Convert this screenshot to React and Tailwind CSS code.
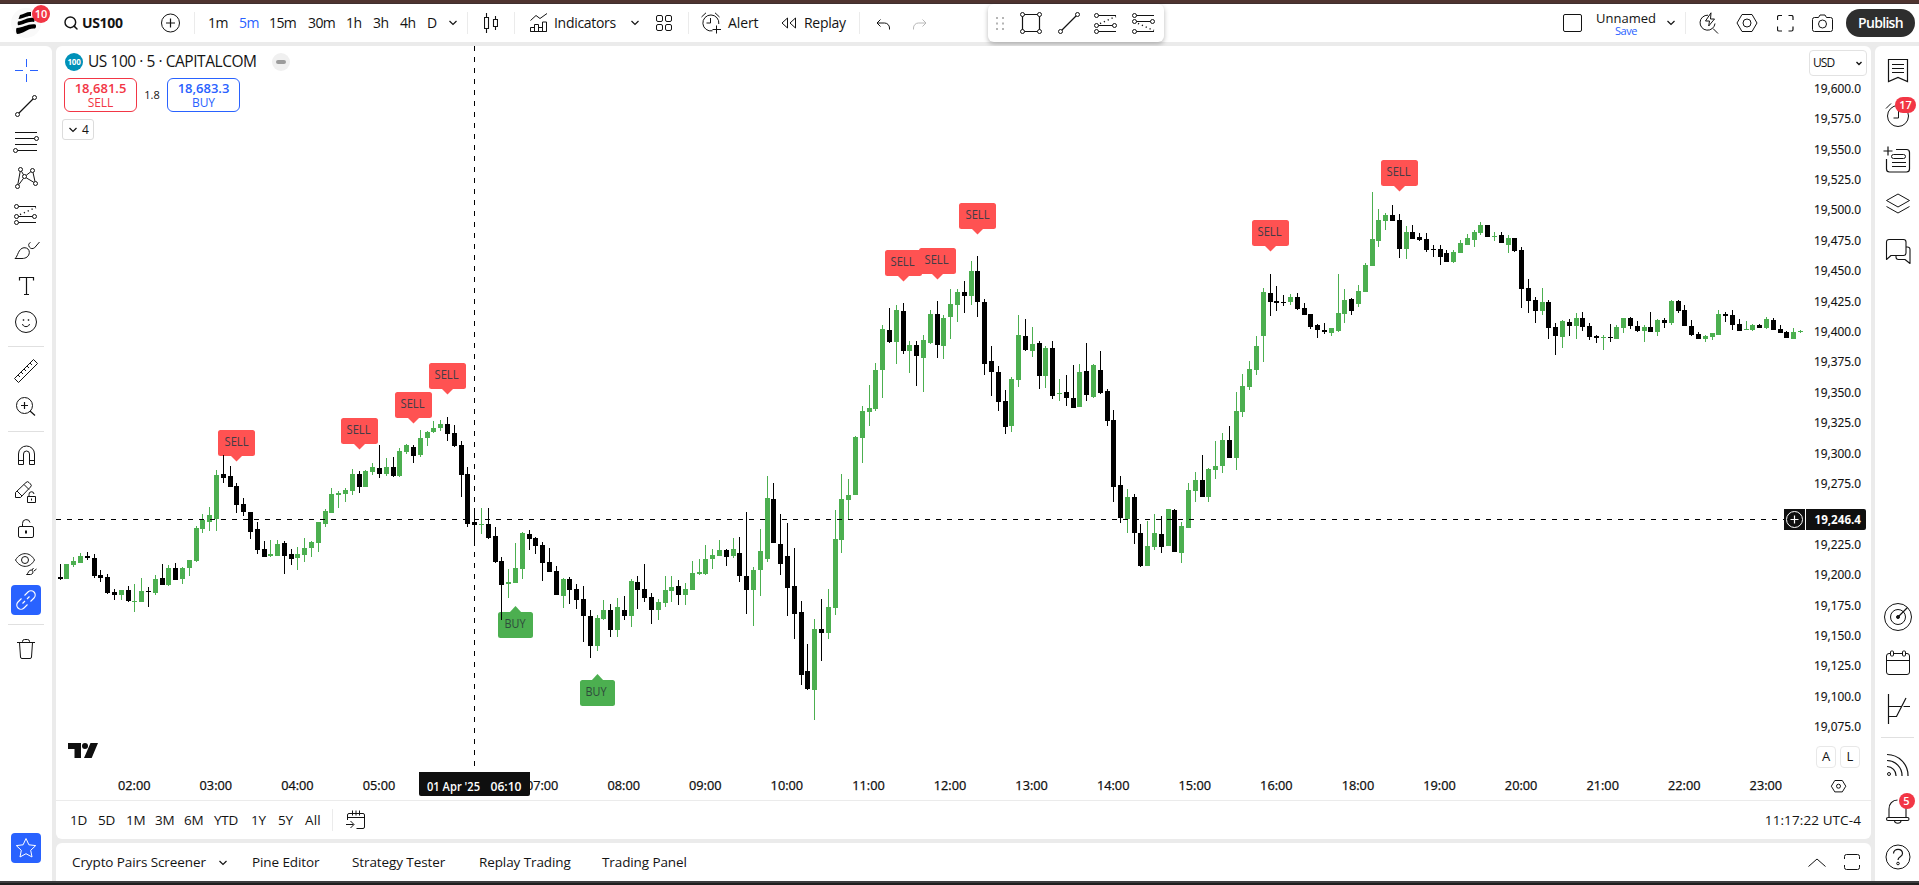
import React from 'react';
import { Search } from 'lucide-react';

// first bar x and bar spacing, in px
const BAR_START = 60.05;
const BAR_STEP = 6.7984;

// [up, high, body top, body bottom, low]
const CANDLES = [
  [0,564,577,579,580],[1,564,564,579,579],[1,557,561,565,567],[1,553,556,563,563],[0,552,556,558,560],
  [0,554,558,576,578],[0,570,575,578,582],[0,574,577,593,594],[0,589,592,595,600],[1,590,590,595,600],
  [0,586,590,601,602],[1,584,601,602,612],[1,578,591,602,602],[0,587,591,592,607],[1,575,579,593,595],
  [0,564,578,585,585],[1,565,568,585,586],[0,563,568,580,580],[1,567,568,579,584],[1,560,560,568,576],
  [1,526,528,561,562],[1,514,520,529,533],[1,507,515,522,531],[1,470,475,519,531],[0,455,474,478,483],
  [0,466,476,487,487],[0,483,486,505,513],[0,498,504,512,516],[0,512,512,532,539],[0,522,529,550,554],
  [0,541,549,557,557],[1,540,554,556,557],[1,540,544,556,556],[0,541,543,556,574],[0,549,554,559,565],
  [1,547,554,558,570],[1,538,548,555,562],[1,541,542,548,557],[1,522,522,543,552],[1,509,511,524,527],
  [1,488,494,513,513],[1,491,493,495,508],[1,488,490,494,502],[1,469,474,491,495],[0,471,474,487,493],
  [1,470,471,487,487],[1,463,467,472,475],[0,445,468,474,478],[1,458,467,474,476],[0,457,467,476,477],
  [1,448,451,476,477],[1,444,445,452,454],[0,445,447,456,463],[1,430,438,455,457],[1,431,432,438,446],
  [1,421,428,432,433],[1,420,424,428,431],[0,417,424,434,441],[0,425,433,446,447],[0,441,445,475,497],
  [0,467,474,524,527],[0,508,522,525,546],[1,508,524,525,534],[0,508,524,538,539],[0,527,536,562,563],
  [0,557,561,585,620],[1,569,582,584,598],[1,543,568,583,583],[1,532,533,569,579],[0,530,534,539,550],
  [0,537,538,546,554],[0,542,545,563,581],[0,548,562,572,572],[0,566,571,595,595],[1,578,579,596,608],
  [0,577,579,590,604],[0,584,589,600,609],[0,586,599,616,642],[0,610,616,646,658],[1,615,618,646,651],
  [1,600,610,619,620],[0,604,610,630,637],[1,598,607,630,637],[0,596,610,616,620],[1,579,581,616,627],
  [0,576,582,590,609],[0,564,589,598,602],[0,593,597,610,624],[1,599,602,610,620],[1,576,590,603,607],
  [1,576,587,591,602],[0,580,586,595,605],[1,583,589,595,605],[1,561,573,590,590],[1,559,572,574,575],
  [1,545,559,574,575],[1,549,555,559,569],[1,540,550,556,556],[0,549,550,557,566],[1,538,549,556,558],
  [0,537,553,576,582],[0,512,576,590,614],[1,567,570,590,626],[1,529,551,570,596],[1,476,498,559,562],
  [0,483,499,543,543],[0,514,544,564,575],[0,523,556,588,616],[0,548,586,614,639],[0,601,612,675,685],
  [0,644,671,689,690],[1,619,629,690,720],[0,599,629,633,661],[1,589,607,633,639],[1,510,539,608,615],
  [1,474,499,540,553],[1,479,495,500,519],[1,436,437,495,495],[1,406,411,438,463],[1,385,408,412,426],
  [1,363,370,409,411],[1,325,329,370,398],[0,308,330,342,343],[1,305,310,342,364],[0,303,311,351,354],
  [1,341,345,351,373],[0,341,345,356,386],[1,335,340,358,392],[1,310,314,343,344],[0,301,314,345,358],
  [1,315,318,346,359],[1,289,304,317,339],[1,289,292,305,322],[0,281,292,296,313],[1,261,271,296,305],
  [0,256,271,302,317],[0,299,302,364,375],[0,346,361,372,396],[0,366,372,402,411],[0,390,401,427,434],
  [1,377,379,426,432],[1,315,335,380,387],[0,319,336,350,351],[1,327,344,351,357],[0,341,343,376,389],
  [1,346,348,376,388],[0,341,348,396,399],[1,379,393,394,401],[0,375,392,398,406],[0,365,398,408,408],
  [1,364,372,407,407],[0,343,371,395,401],[1,364,365,397,398],[0,351,370,393,394],[0,389,391,421,426],
  [0,410,420,487,502],[0,476,485,518,523],[1,489,497,519,533],[0,494,497,533,544],[0,524,533,566,567],
  [1,521,546,566,566],[1,514,533,547,550],[0,516,534,547,553],[1,509,509,546,546],[0,509,510,552,552],
  [1,522,526,553,563],[1,483,490,528,528],[1,472,480,491,502],[0,455,480,497,497],[1,468,469,497,502],
  [1,441,466,470,479],[1,433,440,466,473],[0,426,440,458,458],[1,392,411,458,470],[1,374,386,412,417],
  [1,361,369,387,390],[1,336,346,370,375],[1,288,292,336,362],[0,274,293,302,316],[0,286,301,303,311],
  [0,295,302,303,306],[1,294,297,302,305],[0,293,297,309,310],[0,303,308,315,315],[0,314,314,327,329],
  [0,324,325,330,338],[0,323,330,332,334],[1,328,328,333,336],[1,274,313,331,332],[1,289,300,314,323],
  [0,298,299,311,315],[1,285,291,304,307],[1,263,265,292,292],[1,192,239,266,266],[1,209,220,241,247],
  [1,213,215,221,230],[0,205,215,221,221],[0,214,220,249,258],[1,226,232,249,259],[0,225,232,239,239],
  [0,233,237,240,241],[0,233,239,250,252],[0,245,249,250,257],[0,245,249,257,265],[0,250,253,262,262],
  [1,250,252,262,263],[1,240,243,253,253],[1,234,238,245,245],[1,230,232,240,247],[1,222,225,233,235],
  [0,225,225,237,237],[1,232,236,237,241],[0,232,235,243,243],[1,235,238,245,253],[0,238,238,251,252],
  [0,247,250,289,308],[0,279,288,301,313],[0,297,300,311,323],[1,288,302,311,315],[0,300,302,328,339],
  [0,323,327,336,355],[1,320,321,337,348],[0,319,322,326,336],[1,313,318,326,339],[0,312,318,327,331],
  [0,323,326,337,340],[0,335,336,338,343],[1,335,337,338,350],[0,324,337,338,342],[1,325,327,339,339],
  [1,318,318,328,333],[0,317,318,326,329],[0,321,326,331,332],[1,325,327,331,342],[0,312,327,332,332],
  [1,319,320,332,336],[0,318,320,323,328],[1,300,301,323,325],[0,300,301,311,313],[0,305,310,326,326],
  [0,320,326,335,336],[0,332,334,339,339],[1,335,336,339,342],[1,333,333,337,340],[1,310,314,335,335],
  [0,312,314,316,322],[0,310,315,325,330],[0,319,324,331,331],[1,321,329,330,330],[1,324,325,330,331],
  [0,324,325,328,328],[1,317,319,328,329],[0,318,320,330,330],[0,325,329,333,333],[0,331,332,338,338],
  [1,328,332,339,339],[1,330,331,332,333],
];

const SELLS = [
  { x: 236.5, y: 430, t: 224.5 },
  { x: 359.5, y: 418, t: 346.5 },
  { x: 413.5, y: 392, t: 400.5 },
  { x: 447.5, y: 363, t: 434.5 },
  { x: 903.5, y: 250, t: 890.5 },
  { x: 937.5, y: 248, t: 924.5 },
  { x: 977.5, y: 203, t: 965.5 },
  { x: 1270.5, y: 220, t: 1257.5 },
  { x: 1399.5, y: 160, t: 1386.5 },
];

const BUYS = [
  { x: 515.5, y: 606, t: 504.5 },
  { x: 597.5, y: 674, t: 585.5 },
];

const HOURS = [2, 3, 4, 5, 6, 7, 8, 9, 10, 11, 12, 13, 14, 15, 16, 18, 19, 20, 21, 22, 23];

const PRICES = Array.from({ length: 22 }, (_, i) => 19600 - i * 25);

const barX = (i) => Math.floor(BAR_START + BAR_STEP * i);

const formatPrice = (p) => p.toLocaleString('en-US', { minimumFractionDigits: 1 });

function Icon({ w = 28, h = 28, className = '', children }) {
  return (
    <svg
      width={w}
      height={h}
      viewBox={`0 0 ${w} ${h}`}
      fill="none"
      stroke="currentColor"
      className={`shrink-0 ${className}`}
    >
      {children}
    </svg>
  );
}

function Chevron({ className = '' }) {
  return (
    <Icon w={8} h={6} className={className}>
      <path d="M.5 1 4 4.5 7.5 1" strokeWidth="1.2" />
    </Icon>
  );
}

function Divider({ className = '' }) {
  return <div className={`w-px h-[22px] bg-[#ebebeb] shrink-0 ${className}`} />;
}

function ToolSlot({ children, className = '' }) {
  return <div className={`h-9 w-full flex items-center justify-center shrink-0 ${className}`}>{children}</div>;
}

function SideDivider() {
  return <div className="h-px w-9 my-[6px] bg-[#e0e0e0] shrink-0" />;
}

const RetracementIcon = () => (
  <>
    <path d="M6.5 6.5H24M6.5 16.5h14M6.5 22.5H24" />
    <path d="M8 14.5 24 7.5" strokeDasharray="1.2 3" strokeWidth="1.4" />
    <circle cx="4.5" cy="6.5" r="2" />
    <circle cx="4.5" cy="16.5" r="2" />
    <circle cx="22.5" cy="16.5" r="2" />
    <circle cx="4.5" cy="22.5" r="2" />
  </>
);

const TrendIcon = () => (
  <>
    <path d="M7 21 21 7" strokeWidth="1.2" />
    <circle cx="5.5" cy="22.5" r="2" />
    <circle cx="22.5" cy="5.5" r="2" />
  </>
);

function TopBar() {
  return (
    <div className="h-[38px] bg-white flex items-center text-[14px] text-[#131313] shrink-0">
      {/* Logo */}
      <div className="w-[52px] h-full relative shrink-0">
        <svg width="52" height="38" viewBox="0 0 52 38">
          <circle cx="26" cy="19" r="15" fill="#f9f9f9" />
          <path d="M20 11c4-1 7-3.5 11-3v4c-4-.4-7 2.5-12.5 3z" fill="#000" />
          <path d="M18 17.5c6-.5 9-4.5 16-3.5 1 2 .5 3 0 4-6-1-10 3-16 3.2-.5-1-.5-2.5 0-3.700z" fill="#000" />
          <path d="M16.5 24c7 0 11-4.5 19-3.5 1 1.5.5 3-.5 4-7-1-11 5-18 5.5-1-1.5-1.2-4-.5-6z" fill="#000" />
        </svg>
        <span className="absolute left-8 top-[1px] w-[18px] h-[18px] rounded-full bg-[#f23645] text-white text-[11px] font-semibold flex items-center justify-center">
          10
        </span>
      </div>

      {/* Symbol search */}
      <Search size={16} strokeWidth={2.2} className="ml-[11px] shrink-0" />
      <span className="ml-[3px] w-[79px] -mt-px font-bold tracking-[-0.35px]">US100</span>
      <Icon w={20} h={20}>
        <circle cx="9.5" cy="10" r="9" />
        <path d="M5 10h9M9.5 5.5v9" strokeWidth="1.2" />
      </Icon>
      <Divider className="ml-[13px]" />

      {/* Intervals */}
      <div className="flex ml-[13px] -mt-px tracking-[-0.6px]">
        <span className="w-[31px]">1m</span>
        <span className="w-[30px] text-[#2962ff]">5m</span>
        <span className="w-[39px]">15m</span>
        <span className="w-[38px]">30m</span>
        <span className="w-[27px]">1h</span>
        <span className="w-[27px]">3h</span>
        <span className="w-[27px]">4h</span>
        <span className="w-[22px]">D</span>
      </div>
      <Chevron />
      <Divider className="ml-[10px]" />
      <Icon w={14} h={20} className="ml-4">
        <path d="M.5 4.5h4v11h-4zM2.5 0v4.5M2.5 15.5V20M9.5 6.5h4v7h-4zM11.5 3v3.5M11.5 13.5V17" strokeWidth="1.1" />
      </Icon>
      <Divider className="ml-4" />
      <Icon w={18} h={20} className="ml-[15px]">
        <path d="M.5 7.5 6 2.5l4 3L17 .5M.5 18.5v-4h4v4zM4.5 18.5v-7h4v7M8.5 14.5h4v4M12.5 18.5V9h4v9.5zM.5 18.5h16" />
      </Icon>
      <span className="ml-[6px] w-[77px] -mt-px tracking-[-0.3px]">Indicators</span>
      <Chevron />
      <Icon w={17} h={17} className="ml-[17px]">
        <rect x=".5" y=".5" width="6" height="6" rx="1.5" />
        <rect x="9.5" y=".5" width="6" height="6" rx="1.5" />
        <rect x=".5" y="9.5" width="6" height="6" rx="1.5" />
        <rect x="9.5" y="9.5" width="6" height="6" rx="1.5" />
      </Icon>
      <Divider className="ml-[15px]" />

      {/* Alert and replay */}
      <Icon w={21} h={22} className="ml-3">
        <path d="M17.8 12a8 8 0 1 0-6.3 6.8M9.5 6v5h-4M.5 5 5 .8M14 .8 18.5 5M15.5 13.5v8M11.5 17.5H20" />
      </Icon>
      <span className="ml-[6px] w-[53px] -mt-px tracking-[-0.1px]">Alert</span>
      <Icon w={16} h={12}>
        <path d="M6.5 1v10L1 6zM14.5 1v10L9 6z" strokeLinejoin="round" />
      </Icon>
      <span className="ml-[7px] w-[55px] -mt-px tracking-[-0.3px]">Replay</span>
      <Divider />
      <Icon w={14} h={11} className="ml-4 mt-[2px]">
        <path d="M4.5.5 1 4l3.5 3.5M1 4h7.5a5 5 0 0 1 5 5v1.5" />
      </Icon>
      <Icon w={14} h={11} className="ml-[23px] mt-[2px] text-[#b8b8b8]">
        <path d="M9.5.5 13 4 9.5 7.5M13 4H5.500a5 5 0 0 0-5 5v1.5" />
      </Icon>

      {/* Favorite drawing tools */}
      <div className="ml-[61px] w-44 h-[38px] bg-white rounded-md shadow-[0_2px_5px_rgba(0,0,0,0.28)] flex items-center relative shrink-0">
        <Icon w={8} h={13} className="ml-2 text-[#b5b5b5]">
          <path d="M0 1h2M6 1h2M0 6.5h2M6 6.5h2M0 12h2M6 12h2" strokeWidth="2" />
        </Icon>
        <Icon className="ml-[13px]">
          <path d="M7.5 5.5h13M7.5 22.5h13M5.5 7.5v13M22.5 7.5v13" strokeWidth="1.2" />
          <circle cx="5.5" cy="5.5" r="2" />
          <circle cx="22.5" cy="5.5" r="2" />
          <circle cx="5.5" cy="22.5" r="2" />
          <circle cx="22.5" cy="22.5" r="2" />
        </Icon>
        <Icon className="ml-[10px]">
          <TrendIcon />
        </Icon>
        <Icon className="ml-[9px]">
          <RetracementIcon />
        </Icon>
        <Icon className="ml-[10px]">
          <path d="M6.5 6.5H24M6.5 12.5h14M6.5 22.5H24" />
          <path d="M8 14.5 24 21.5" strokeDasharray="1.2 3" strokeWidth="1.4" />
          <circle cx="4.5" cy="6.5" r="2" />
          <circle cx="4.5" cy="12.5" r="2" />
          <circle cx="22.5" cy="12.5" r="2" />
          <circle cx="4.5" cy="22.5" r="2" />
        </Icon>
      </div>

      {/* Layout controls */}
      <div className="ml-auto flex items-center shrink-0">
        <div className="w-[19px] h-[18px] border border-[#131313] rounded-[2px]" />
        <div className="ml-[15px] w-[58px] flex flex-col items-center">
          <span className="leading-[14px] text-[13px]">Unnamed</span>
          <span className="leading-[11px] text-[11px] tracking-[-0.4px] text-[#2962ff]">Save</span>
        </div>
        <Chevron className="ml-3" />
        <Divider className="ml-[10px]" />
        <Icon w={20} h={22} className="ml-[13px]">
          <path d="M9 3.2A7.5 7.5 0 1 0 16 11.5M14 16.5l5 5M12 .8 6.5 9h4l-.8 5L15.5 7h-4z" strokeLinejoin="round" />
        </Icon>
        <Icon w={22} h={20} className="ml-[17px]">
          <path d="M6 1.5h10l5 8.5-5 8.5H6L1 10z" strokeLinejoin="round" />
          <circle cx="11" cy="10" r="4" />
        </Icon>
        <Icon w={17} h={17} className="ml-[19px]">
          <path d="M.5 5V2A1.5 1.5 0 0 1 2 .5h3M11.5.5h3A1.5 1.5 0 0 1 16 2v3M16 11.5v3a1.5 1.5 0 0 1-1.5 1.5h-3M5 16H2a1.5 1.5 0 0 1-1.5-1.5v-3" strokeWidth="1.2" />
        </Icon>
        <Icon w={21} h={19} className="ml-[18px]">
          <path d="M6.5 3.5 8 1h5l1.5 2.5h4a2 2 0 0 1 2 2v10a2 2 0 0 1-2 2h-16a2 2 0 0 1-2-2v-10a2 2 0 0 1 2-2z" />
          <circle cx="10.5" cy="10" r="4" />
        </Icon>
        <button className="ml-[13px] mr-1 w-[69px] h-7 pb-px rounded-full bg-[#2e2e2e] text-white font-semibold tracking-[-0.7px] leading-none">
          Publish
        </button>
      </div>
    </div>
  );
}

function LeftToolbar() {
  return (
    <div className="w-[52px] bg-white rounded-tr-md flex flex-col items-center pt-[6px] text-[#131313] shrink-0">
      <ToolSlot className="text-[#2962ff]">
        <Icon>
          <path d="M3 14.5h8M18 14.5h8M14.5 3v8M14.5 18v8" />
        </Icon>
      </ToolSlot>
      <ToolSlot>
        <Icon>
          <TrendIcon />
        </Icon>
      </ToolSlot>
      <ToolSlot>
        <Icon>
          <path d="M3 4.5h22M3 10.5h19.5M3 16.5h22M5.5 22.5H25" />
          <circle cx="24.5" cy="10.5" r="2" />
          <circle cx="3.5" cy="22.5" r="2" />
        </Icon>
      </ToolSlot>
      <ToolSlot>
        <Icon>
          <path d="M5.8 20.5 8.2 7.5M9.5 7.3l2 3.5M6.7 20.8l4.8-6.5M14.2 11.3l4.7-3.6M14.2 13.8l7.6 4.5M21 8.5l2 9" />
          <circle cx="8.5" cy="5.5" r="2" />
          <circle cx="20.5" cy="6.5" r="2" />
          <circle cx="12.5" cy="12.5" r="2" />
          <circle cx="5.5" cy="22.5" r="2" />
          <circle cx="23.5" cy="19.5" r="2" />
        </Icon>
      </ToolSlot>
      <ToolSlot>
        <Icon>
          <RetracementIcon />
        </Icon>
      </ToolSlot>
      <ToolSlot>
        <Icon>
          <path d="M3 22.5c3-2 3-10 9-10.8 3.5-.2 5.5 2.3 5.3 4.8-.3 4-3.3 6-7.3 6zM18.5 6.5c-2.2 1-2.2 2.5-1.2 4.5 1.5 2 3.5 2 5.2.8L27.5 6" />
        </Icon>
      </ToolSlot>
      <ToolSlot>
        <Icon>
          <path d="M7.5 8.5v-3h14v3M14.5 5.5v17M12 22.5h5" strokeWidth="1.2" />
        </Icon>
      </ToolSlot>
      <ToolSlot>
        <Icon>
          <circle cx="14" cy="14" r="10.5" />
          <path d="M10.5 16c.5 3.5 6.5 3.5 7 0" />
          <path d="M10.8 12h1.4M15.8 12h1.4" strokeWidth="1.6" />
        </Icon>
      </ToolSlot>
      <SideDivider />
      <ToolSlot>
        <Icon>
          <path d="M2.5 21.5 21.5 2.5l4 4-19 19zM6 18l2 2M9 15l2 2M12 12l2 2M15 9l2 2M18 6l2 2" strokeLinejoin="round" />
        </Icon>
      </ToolSlot>
      <ToolSlot>
        <Icon>
          <circle cx="12.5" cy="12.5" r="8" />
          <path d="m18 18 5 4.5M9 12.5h7M12.5 9v7" strokeWidth="1.2" />
        </Icon>
      </ToolSlot>
      <SideDivider />
      <ToolSlot>
        <Icon>
          <path d="M6.5 22.5V12a8 8 0 0 1 16 0v10.5h-5V12a3 3 0 0 0-6 0v10.5zM6.5 18.5h5M17.5 18.5h5" />
        </Icon>
      </ToolSlot>
      <ToolSlot>
        <Icon>
          <path d="M3.5 19.5v-5l10.5-10a2 2 0 0 1 3 0l1.5 1.5a2 2 0 0 1 0 3L8.5 19.5zM12 6.5l5 5M5 13l5 5" />
          <path d="M15.5 18.5h8v6h-8zM17 18.5v-2a2.5 2.5 0 0 1 5-.5M19.5 20.5v2" />
        </Icon>
      </ToolSlot>
      <ToolSlot>
        <Icon>
          <rect x="6.5" y="12.5" width="15" height="11" rx="1.5" />
          <path d="M10.5 12.5v-3a3.800 3.800 0 0 1 7.5-1" />
          <path d="M14 16.5v3" strokeWidth="2" />
        </Icon>
      </ToolSlot>
      <ToolSlot>
        <Icon>
          <path d="M3.5 10c5-8.5 14.5-8.5 19 0-4.5 8.5-14 8.5-19 0z" />
          <circle cx="13" cy="10" r="3.5" />
          <path d="M14.5 24.5c2-1 2-4.5 4.5-4.5 3 0 2.5 4.5-.5 4.5zM20 20l1.5-2M22 21l2.5-2" />
        </Icon>
      </ToolSlot>
      <ToolSlot>
        <div className="w-[30px] h-[30px] rounded bg-[#2962ff] text-white flex items-center justify-center">
          <Icon>
            <path d="M12.5 9.5 16 6a4.2 4.2 0 0 1 6 6l-3.5 3.5M15.5 18.5 12 22a4.2 4.2 0 0 1-6-6l3.5-3.5M10.5 17.5l2.5-2.5M15 13l2.5-2.5" strokeWidth="1.1" />
          </Icon>
        </div>
      </ToolSlot>
      <SideDivider />
      <ToolSlot>
        <Icon>
          <path d="M5 7.5h18M10.5 7.5v-1a2 2 0 0 1 2-2h3a2 2 0 0 1 2 2v1M7.5 7.5l1 14.5a1.5 1.5 0 0 0 1.5 1.5h8a1.5 1.5 0 0 0 1.5-1.5l1-14.5" />
        </Icon>
      </ToolSlot>
      <div className="mt-auto mb-[18px] w-[30px] h-[30px] rounded bg-[#2962ff] text-white flex items-center justify-center">
        <Icon>
          <path d="m14 4.5 2.9 6.3 6.8.8-5 4.7 1.3 6.7-6-3.3-6 3.3 1.3-6.7-5-4.7 6.8-.8z" strokeLinejoin="round" />
        </Icon>
      </div>
    </div>
  );
}

function Chart() {
  return (
    <svg width="1815" height="754" viewBox="56 46 1815 754" fontSize="12" className="block">
      {/* Signal labels */}
      {SELLS.map((s) => (
        <g key={s.x}>
          <rect x={s.x - 18.5} y={s.y} width="37" height="26" rx="2.5" fill="#ff5252" />
          <path d={`M${s.x - 6} ${s.y + 25.5}h12l-6 6z`} fill="#ff5252" />
          <text x={s.t} y={s.y + 16} fill="#433c46" textLength="24" lengthAdjust="spacingAndGlyphs">SELL</text>
        </g>
      ))}
      {BUYS.map((b) => (
        <g key={b.x}>
          <rect x={b.x - 17.5} y={b.y + 6} width="35" height="26" rx="2.5" fill="#4caf50" />
          <path d={`M${b.x - 6} ${b.y + 6.5}h12l-6-6.5z`} fill="#4caf50" />
          <text x={b.t} y={b.y + 22} fill="#2f4a3c" textLength="21" lengthAdjust="spacingAndGlyphs">BUY</text>
        </g>
      ))}

      {/* Candles */}
      {CANDLES.map(([up, high, top, bottom, low], i) => (
        <g key={i} fill={up ? '#4caf50' : '#000000'} shapeRendering="crispEdges">
          <rect x={barX(i)} y={high} width="1" height={low - high} />
          <rect x={barX(i) - 2} y={top} width="5" height={bottom - top} />
        </g>
      ))}

      {/* Crosshair */}
      <g stroke="#000" strokeDasharray="5 6" shapeRendering="crispEdges">
        <path d="M474.5 46V767" />
        <path d="M56 519.5H1784" />
      </g>

      {/* Time scale */}
      {HOURS.map((h, i) => (
        h !== 6 && (
          <text
            key={h}
            x={118 + i * 81.58}
            y="790"
            fill="#0f0f0f"
            stroke="#0f0f0f"
            strokeWidth="0.25"
            textLength="32.5"
            lengthAdjust="spacingAndGlyphs"
          >
            {`${String(h).padStart(2, '0')}:00`}
          </text>
        )
      ))}
      <path d="M419 772h111v22a2 2 0 0 1-2 2H421a2 2 0 0 1-2-2z" fill="#0f0f0f" />
      <g fill="#fff" fontWeight="600">
        <text x="427" y="791" textLength="53" lengthAdjust="spacingAndGlyphs">01 Apr '25</text>
        <text x="490.5" y="791" textLength="31" lengthAdjust="spacingAndGlyphs">06:10</text>
      </g>

      {/* Price scale */}
      {PRICES.map((p, i) => (
        p !== 19250 && (
          <text
            key={p}
            x="1814"
            y={92.7 + i * 30.4}
            fill="#0f0f0f"
            stroke="#0f0f0f"
            strokeWidth="0.15"
            textLength="47"
            lengthAdjust="spacingAndGlyphs"
          >
            {formatPrice(p)}
          </text>
        )
      ))}
      <path d="M1784 509h21v21h-21zM1806 509h58a2 2 0 0 1 2 2v17a2 2 0 0 1-2 2h-58z" fill="#0f0f0f" />
      <circle cx="1794.5" cy="519.5" r="8" fill="none" stroke="#fff" />
      <path d="M1790.5 519.5h8M1794.5 515.5v8" stroke="#fff" strokeWidth="1.2" />
      <text x="1814.5" y="523.5" fill="#fff" fontWeight="700" textLength="46.5" lengthAdjust="spacingAndGlyphs">
        19,246.4
      </text>

      {/* Watermark */}
      <path d="M68 743h13v15h-6.5v-9H68zM90.5 743H98l-6.3 15H84z" fill="#0f0f0f" />
      <circle cx="85" cy="746" r="3" fill="#0f0f0f" />

      {/* Scale settings */}
      <g fill="none" stroke="#131313">
        <path d="M1834.8 780.5h7.5l3.5 5.7-3.5 5.7h-7.5l-3.5-5.7z" />
        <circle cx="1838.5" cy="786.2" r="2" />
      </g>
    </svg>
  );
}

function Legend() {
  return (
    <div className="absolute left-0 top-0 pl-2 pt-[6px] text-[#131313]">
      <div className="flex items-center h-5 pl-px">
        <span className="w-[18px] h-[18px] rounded-full bg-[#0091b8] text-white text-[8px] font-bold flex items-center justify-center tracking-[-0.2px]">
          100
        </span>
        <span className="ml-[5px] w-[184px] text-[15.5px] tracking-[-0.45px] whitespace-nowrap">
          US 100 · 5 · CAPITALCOM
        </span>
        <span className="w-[18px] h-[18px] rounded-full bg-[#f0f0f0] flex items-center justify-center">
          <span className="w-[10px] h-1 rounded-full bg-[#9c9c9c]" />
        </span>
      </div>
      <div className="flex items-center mt-[6px]">
        <div className="w-[73px] h-[34px] rounded-md border border-[#f23645] text-[#f23645] flex flex-col items-center justify-center">
          <span className="text-[13px] leading-[15px] font-semibold">18,681.5</span>
          <span className="text-[12px] leading-[14px] tracking-[-0.1px]">SELL</span>
        </div>
        <span className="w-[30px] text-center text-[11px]">1.8</span>
        <div className="w-[73px] h-[34px] rounded-md border border-[#2962ff] text-[#2962ff] flex flex-col items-center justify-center">
          <span className="text-[13px] leading-[15px] font-semibold">18,683.3</span>
          <span className="text-[12px] leading-[14px] tracking-[-0.1px]">BUY</span>
        </div>
      </div>
      <div className="mt-[7px] -ml-[2px] w-8 h-[21px] border border-[#dcdcdc] rounded-[3px] flex items-center pl-[6px] text-[12px]">
        <Chevron />
        <span className="ml-[5px]">4</span>
      </div>
    </div>
  );
}

function ChartPanel() {
  return (
    <div className="h-[793px] bg-white rounded-md overflow-hidden relative shrink-0">
      <Chart />
      <Legend />
      <div className="absolute right-1 top-1 w-[58px] h-[26px] border border-[#e2e2e2] rounded flex items-center justify-between pl-[3px] pr-1 text-[12px] text-[#131313]">
        <span className="tracking-[-0.9px]">USD</span>
        <Icon w={6} h={5}>
          <path d="M.5 1 3 3.5 5.5 1" strokeWidth="1.4" />
        </Icon>
      </div>
      <div className="absolute right-[11px] top-[700px] flex gap-1 text-[13px] text-[#131313]">
        <span className="w-5 h-[22px] border border-[#e8e8e8] rounded flex items-center justify-center">A</span>
        <span className="w-5 h-[22px] border border-[#e8e8e8] rounded flex items-center justify-center">L</span>
      </div>

      {/* Date ranges */}
      <div className="h-[39px] border-t border-[#ebebeb] flex items-center pl-[14px] text-[13.5px] text-[#131313]">
        <div className="flex w-[262px] tracking-[-0.3px]">
          <span className="w-[28px]">1D</span>
          <span className="w-[28px]">5D</span>
          <span className="w-[29px]">1M</span>
          <span className="w-[29px]">3M</span>
          <span className="w-[30px]">6M</span>
          <span className="w-[37px]">YTD</span>
          <span className="w-[27px]">1Y</span>
          <span className="w-[27px]">5Y</span>
          <span className="w-[27px] tracking-[0.2px]">All</span>
        </div>
        <Divider />
        <Icon w={20} h={20} className="ml-[13px]">
          <path d="M1.5 10V5A1.5 1.5 0 0 1 3 3.5h14A1.5 1.5 0 0 1 18.5 5v12a1.5 1.5 0 0 1-1.5 1.5h-6.5M1.5 7.5h17M6.5.5v5M10 .5v5M13.5.5v5M0 14.5h7.5M4.5 11l3.5 3.5L4.5 18" />
        </Icon>
        <span className="ml-auto mr-[10px] tracking-[0.1px]">11:17:22 UTC-4</span>
      </div>
    </div>
  );
}

function BottomTabs() {
  return (
    <div className="h-[38px] mt-1 bg-white rounded-t-md flex items-center pl-4 text-[13.5px] text-[#131313] shrink-0">
      <div className="flex items-center mt-px tracking-[-0.1px]">
        <span className="w-[147px]">Crypto Pairs Screener</span>
        <Chevron />
        <span className="ml-[25px] w-[100px]">Pine Editor</span>
        <span className="w-[127px]">Strategy Tester</span>
        <span className="w-[123px]">Replay Trading</span>
        <span>Trading Panel</span>
      </div>
      <Icon w={18} h={9} className="ml-auto">
        <path d="M.5 8.5 9 1l8.5 7.5" />
      </Icon>
      <Icon w={17} h={17} className="ml-[18px] mr-[10px]">
        <path d="M.5 5V2.5a2 2 0 0 1 2-2h11a2 2 0 0 1 2 2V5M15.5 11v2.5a2 2 0 0 1-2 2h-11a2 2 0 0 1-2-2V11" />
      </Icon>
    </div>
  );
}

function RightSidebar() {
  return (
    <div className="w-11 bg-white rounded-tl-md flex flex-col items-center text-[#131313] shrink-0">
      <Icon className="mt-[10px] ml-px">
        <path d="M4.5 3.5h19v22l-9.5-4-9.5 4zM8 8.5h12M8 12.5h12M8 16.5h12" strokeWidth="1.2" />
      </Icon>
      <div className="relative mt-[17px]">
        <Icon>
          <circle cx="15" cy="15" r="10.5" />
          <path d="M15.5 9v8h-5M3 7.500l5-5" />
        </Icon>
        <span className="absolute left-3 -top-1 w-[21px] h-4 rounded-full bg-[#f23645] text-white text-[11px] font-semibold flex items-center justify-center">
          17
        </span>
      </div>
      <Icon w={30} h={28} className="mt-4">
        <path d="M4.5 14v10a3 3 0 0 0 3 3h17a3 3 0 0 0 3-3V7.500a3 3 0 0 0-3-3H14M6 1.5v9M1.5 6h9M10 17.5h14M10 21.5h14" strokeWidth="1.2" />
        <rect x="9.5" y="9.5" width="14" height="4" rx="2" />
      </Icon>
      <Icon className="mt-[17px] ml-px">
        <path d="M14 4 25.5 10.5 14 17 2.5 10.5zM2.5 16.5 14 23l11.5-6.5" />
      </Icon>
      <Icon className="mt-[19px] ml-px">
        <path d="M2.5 22.5V5a2.5 2.5 0 0 1 2.5-2.5h14.5A2.5 2.5 0 0 1 22 5v11a2.5 2.5 0 0 1-2.5 2.5H7zM12 18.5v1.5a2.5 2.5 0 0 0 2.5 2.5H21l5 4V12.5a2.5 2.5 0 0 0-2.5-2.5H22" strokeLinejoin="round" strokeWidth="1.1" />
      </Icon>

      <Icon w={30} h={30} className="mt-[337px] ml-px">
        <circle cx="15" cy="15" r="13.5" />
        <circle cx="15" cy="15" r="7.5" />
        <circle cx="15" cy="15" r="1.5" fill="currentColor" />
        <path d="m15 15 9.5-9.5" strokeWidth="1.3" />
      </Icon>
      <Icon className="mt-[17px] ml-px">
        <rect x="2.5" y="4.5" width="23" height="21" rx="2.5" />
        <path d="M2.5 11.5h23" />
        <rect x="6.5" y="2" width="3" height="5" rx="1" fill="#fff" />
        <rect x="18.5" y="2" width="3" height="5" rx="1" fill="#fff" />
      </Icon>
      <Icon w={28} h={32} className="mt-4 ml-px">
        <path d="M4.5 1v30M4.5 13.5h13M19.5 13.5H26M4.5 23.5h8L22 5" strokeWidth="1.2" />
      </Icon>
      <div className="w-[33px] h-px bg-[#e0e0e0] mt-3 shrink-0" />
      <Icon className="mt-[13px] ml-px">
        <circle cx="5" cy="23" r="1.5" />
        <path d="M3 15.5a9 9 0 0 1 9 9.5M3 9.5a15 15 0 0 1 15 15.5M3 3.5a21 21 0 0 1 21 21.5" strokeWidth="1.2" />
      </Icon>
      <div className="relative mt-[18px] ml-px">
        <Icon>
          <path d="M5 20.5V12a8.5 8.5 0 0 1 8.5-9M22 10v10.5M4 20.5h19.5a1 1 0 0 1 0 3H4a1 1 0 0 1 0-3zM10.5 24c.5 3 6 3 6.5 0" strokeWidth="1.1" />
        </Icon>
        <span className="absolute left-[15px] -top-1 w-4 h-4 rounded-full bg-[#f23645] text-white text-[11px] font-semibold flex items-center justify-center">
          5
        </span>
      </div>
      <Icon className="mt-[18px] ml-px">
        <circle cx="14" cy="14" r="12" />
        <path d="M9.5 10.5c0-5.5 9-5.5 9 0 0 3.5-4.5 3-4.5 6.5" strokeWidth="1.2" />
        <circle cx="14" cy="20.5" r="1.3" />
      </Icon>
    </div>
  );
}

export default function App() {
  return (
    <div className="w-[1919px] h-[885px] bg-[#ebebeb] flex flex-col overflow-hidden font-['Open_Sans','Noto_Sans',sans-serif]">
      <div className="h-1 bg-[#4f3430] border-b border-[#3f2f2f] shrink-0" />
      <TopBar />
      <div className="flex h-[835px] mt-1 gap-1 shrink-0">
        <LeftToolbar />
        <div className="flex-1 flex flex-col">
          <ChartPanel />
          <BottomTabs />
        </div>
        <RightSidebar />
      </div>
      <div className="flex-1 bg-[#1f1f1f] border-t-2 border-[#3d3d3f]" />
    </div>
  );
}
